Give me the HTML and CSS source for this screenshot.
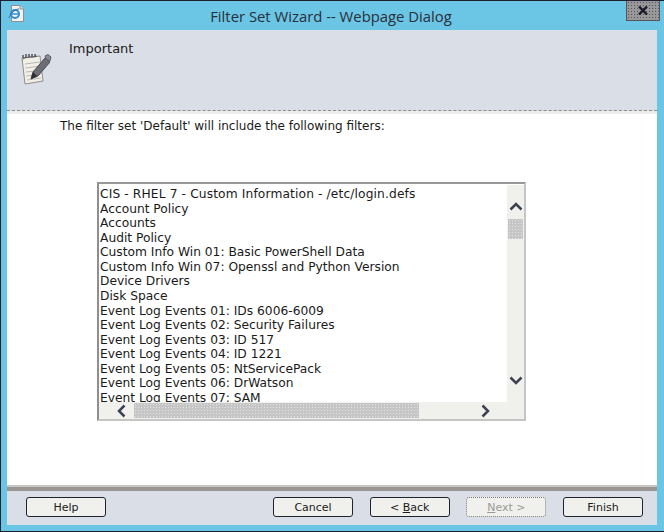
FILE: index.html
```html
<!DOCTYPE html>
<html lang="en">
<head>
    <meta charset="UTF-8">
    <title>Filter Set Wizard -- Webpage Dialog</title>
    <link rel="stylesheet" href="styles.css">
</head>
<body>
<div class="window">
    <div class="titlebar">
        <svg class="page-icon" width="17" height="18" viewBox="0 0 17 18">
            <path d="M3.5 .5H12L15.500 4V16.500H3.500Z" fill="#f2f3f1" stroke="#8b8f92"/>
            <path d="M12 .5V4H15.500" fill="#dfe2e2" stroke="#8b8f92"/>
            <circle cx="7" cy="9" r="4" fill="none" stroke="#2f8fd0" stroke-width="2"/>
            <path d="M3.500 9H10.500" stroke="#2f8fd0" stroke-width="1.500"/>
            <path d="M1 13C2 9 7 4 11 4" fill="none" stroke="#3a6f9c"/>
        </svg>
        <div class="title">Filter Set Wizard -- Webpage Dialog</div>
        <div class="close">
            <svg width="10" height="9" viewBox="0 0 10 9">
                <path d="M1 .5L9 8.500M9 .5L1 8.500" stroke="#1a1a2a" stroke-width="2.400"/>
            </svg>
        </div>
    </div>
    <div class="content">
        <div class="head">
            <svg class="note-icon" width="32" height="34" viewBox="0 0 32 34">
                <path d="M2 5L20 3L23 28L5 31Z" fill="#f1efe6" stroke="#8d8d8d"/>
                <path d="M5 11L20 9M5.500 15L20.500 13M6 19L15 18M6.500 23L14 22M7 27L21 25" stroke="#b9b9b4"/>
                <path d="M3 5V2M6 5V1M9 4V1M12 4V1M15 4V1" stroke="#55565c" stroke-width="1.500"/>
                <path d="M3 6C7 3 14 5 17 3" fill="none" stroke="#55565c"/>
                <path d="M11 26L13 19L25 5L30 9L18 23Z" fill="#6c6d75" stroke="#4b4c54"/>
                <path d="M11 26L13 19L17 23Z" fill="#2d2d33"/>
                <path d="M25 3L28 1.500L31 4L30 8L26 6Z" fill="#8b8c92" stroke="#5e5f66"/>
            </svg>
            <div class="head-text">Important</div>
        </div>
        <div class="body">
            <p class="intro">The filter set 'Default' will include the following filters:</p>
            <div class="listbox">
                <ul class="items">
                    <li class="first-item">CIS - RHEL 7 - Custom Information - /etc/login.defs</li>
                    <li>Account Policy</li>
                    <li>Accounts</li>
                    <li>Audit Policy</li>
                    <li>Custom Info Win 01: Basic PowerShell Data</li>
                    <li>Custom Info Win 07: Openssl and Python Version</li>
                    <li>Device Drivers</li>
                    <li>Disk Space</li>
                    <li>Event Log Events 01: IDs 6006-6009</li>
                    <li>Event Log Events 02: Security Failures</li>
                    <li>Event Log Events 03: ID 517</li>
                    <li>Event Log Events 04: ID 1221</li>
                    <li>Event Log Events 05: NtServicePack</li>
                    <li>Event Log Events 06: DrWatson</li>
                    <li>Event Log Events 07: SAM</li>
                </ul>
                <div class="vscroll">
                    <svg class="arrow-up" width="14" height="9" viewBox="0 0 14 9"><path d="M1.500 7.500L7 2L12.500 7.500" fill="none" stroke="#3d4152" stroke-width="2.500"/></svg>
                    <div class="vthumb"></div>
                    <svg class="arrow-down" width="14" height="9" viewBox="0 0 14 9"><path d="M1.500 1.500L7 7L12.500 1.500" fill="none" stroke="#3d4152" stroke-width="2.500"/></svg>
                </div>
                <div class="hscroll">
                    <svg class="arrow-left" width="9" height="14" viewBox="0 0 9 14"><path d="M7.500 1.500L2 7L7.500 12.500" fill="none" stroke="#3d4152" stroke-width="2.500"/></svg>
                    <div class="hthumb"></div>
                    <svg class="arrow-right" width="9" height="14" viewBox="0 0 9 14"><path d="M1.500 1.500L7 7L1.500 12.500" fill="none" stroke="#3d4152" stroke-width="2.500"/></svg>
                </div>
                <div class="corner"></div>
            </div>
        </div>
        <div class="foot">
            <button class="btn">Help</button>
            <div class="foot-right">
                <button class="btn">Cancel</button>
                <button class="btn">&lt; <u>B</u>ack</button>
                <button class="btn disabled"><u>N</u>ext &gt;</button>
                <button class="btn">Finish</button>
            </div>
        </div>
    </div>
</div>
</body>
</html>
```

FILE: styles.css
```css
*{
    margin: 0;
    padding: 0;
    box-sizing: border-box;
}
li{
    list-style: none;
}
body{
    width: 664px;
    height: 532px;
    overflow: hidden;
    background: #6bc5e5;
    font-family: "DejaVu Sans", sans-serif;
    font-size: 12px;
    color: #1a1a1a;
}
.window{
    width: 664px;
    height: 532px;
    display: flex;
    flex-direction: column;
    background: #6bc5e5;
    border: 1px solid #1c2030;
    border-width: 1px 0 1px 1px;
    padding: 0 7px 6px 6px;
}
.titlebar{
    height: 29px;
    flex: none;
    display: flex;
    align-items: flex-start;
}
.page-icon{
    margin: 4px 0 0 1px;
    flex: none;
}
.title{
    flex: 1;
    text-align: center;
    font-family: "Open Sans", sans-serif;
    font-size: 14.850px;
    line-height: 20px;
    padding: 5px 0 0 11px;
    color: #2a2e38;
}
.close{
    width: 34px;
    height: 20px;
    flex: none;
    margin-right: -3px;
    display: flex;
    align-items: center;
    justify-content: center;
    background-color: #98989a;
    background-image: radial-gradient(#55555a 35%, transparent 40%);
    background-size: 3px 3px;
    border: 1px solid #55565c;
    border-top: 0;
}
.content{
    flex: 1;
    display: flex;
    flex-direction: column;
}
.head{
    height: 81px;
    flex: none;
    display: flex;
    background: #dadee6;
    border-bottom: 1px dashed #8f8d8a;
}
.note-icon{
    margin: 23px 0 0 13px;
    flex: none;
}
.head-text{
    padding: 11px 0 0 17px;
    font-size: 13px;
    line-height: 16px;
}
.body{
    flex: 1;
    background: #fff;
    border-top: 3px solid #eceded;
    padding: 5px 0 0 53px;
}
.intro{
    line-height: 15px;
}
.listbox{
    width: 429px;
    height: 239px;
    margin: 48px 0 0 37px;
    display: grid;
    grid-template-columns: 408px 17px;
    grid-template-rows: 218px 17px;
    border: 2px solid #98979a;
    border-right-color: #c4c5c5;
    border-bottom-color: #c4c5c5;
    border-left-color: #8f8f92;
    overflow: hidden;
}
.items{
    overflow: hidden;
    padding: 3px 0 0 1px;
    font-size: 12.250px;
    line-height: 14.570px;
    white-space: nowrap;
}
.first-item{
    letter-spacing: .12px;
}
.vscroll{
    display: flex;
    flex-direction: column;
    align-items: center;
    margin-top: 1px;
    background: #f0f1ec;
}
.arrow-up{
    margin-top: 17px;
    flex: none;
}
.vthumb{
    width: 15px;
    height: 20px;
    margin-top: 8px;
    flex: none;
    background-color: #c6c6c6;
    background-image: radial-gradient(#e2e2e2 30%, transparent 35%);
    background-size: 3px 3px;
}
.arrow-down{
    margin-top: 137px;
    flex: none;
}
.hscroll{
    display: flex;
    align-items: center;
    background: #f0f1ec;
}
.arrow-left{
    margin-left: 18px;
    flex: none;
}
.hthumb{
    width: 285px;
    height: 15px;
    margin-left: 8px;
    flex: none;
    background-color: #c6c6c6;
    background-image: radial-gradient(#e2e2e2 30%, transparent 35%);
    background-size: 3px 3px;
}
.arrow-right{
    margin-left: 62px;
    flex: none;
}
.corner{
    background: #f0f1ec;
}
.foot{
    height: 38px;
    flex: none;
    display: flex;
    justify-content: space-between;
    background: #dadee6;
    border-top: 4px solid #9a9694;
    box-shadow: 0 -2px 0 #c8c7c4;
    padding: 6px 14px 0 19px;
}
.foot-right{
    display: flex;
    gap: 16.660px;
}
.btn{
    width: 80px;
    height: 20px;
    font-family: "DejaVu Sans", sans-serif;
    font-size: 11px;
    color: #1a1a1a;
    background: #f0f1ec;
    border: 1px solid #20222e;
    border-radius: 3px;
}
.btn.disabled{
    color: #9a9a9a;
    border: 1px dotted #77777a;
}
```
